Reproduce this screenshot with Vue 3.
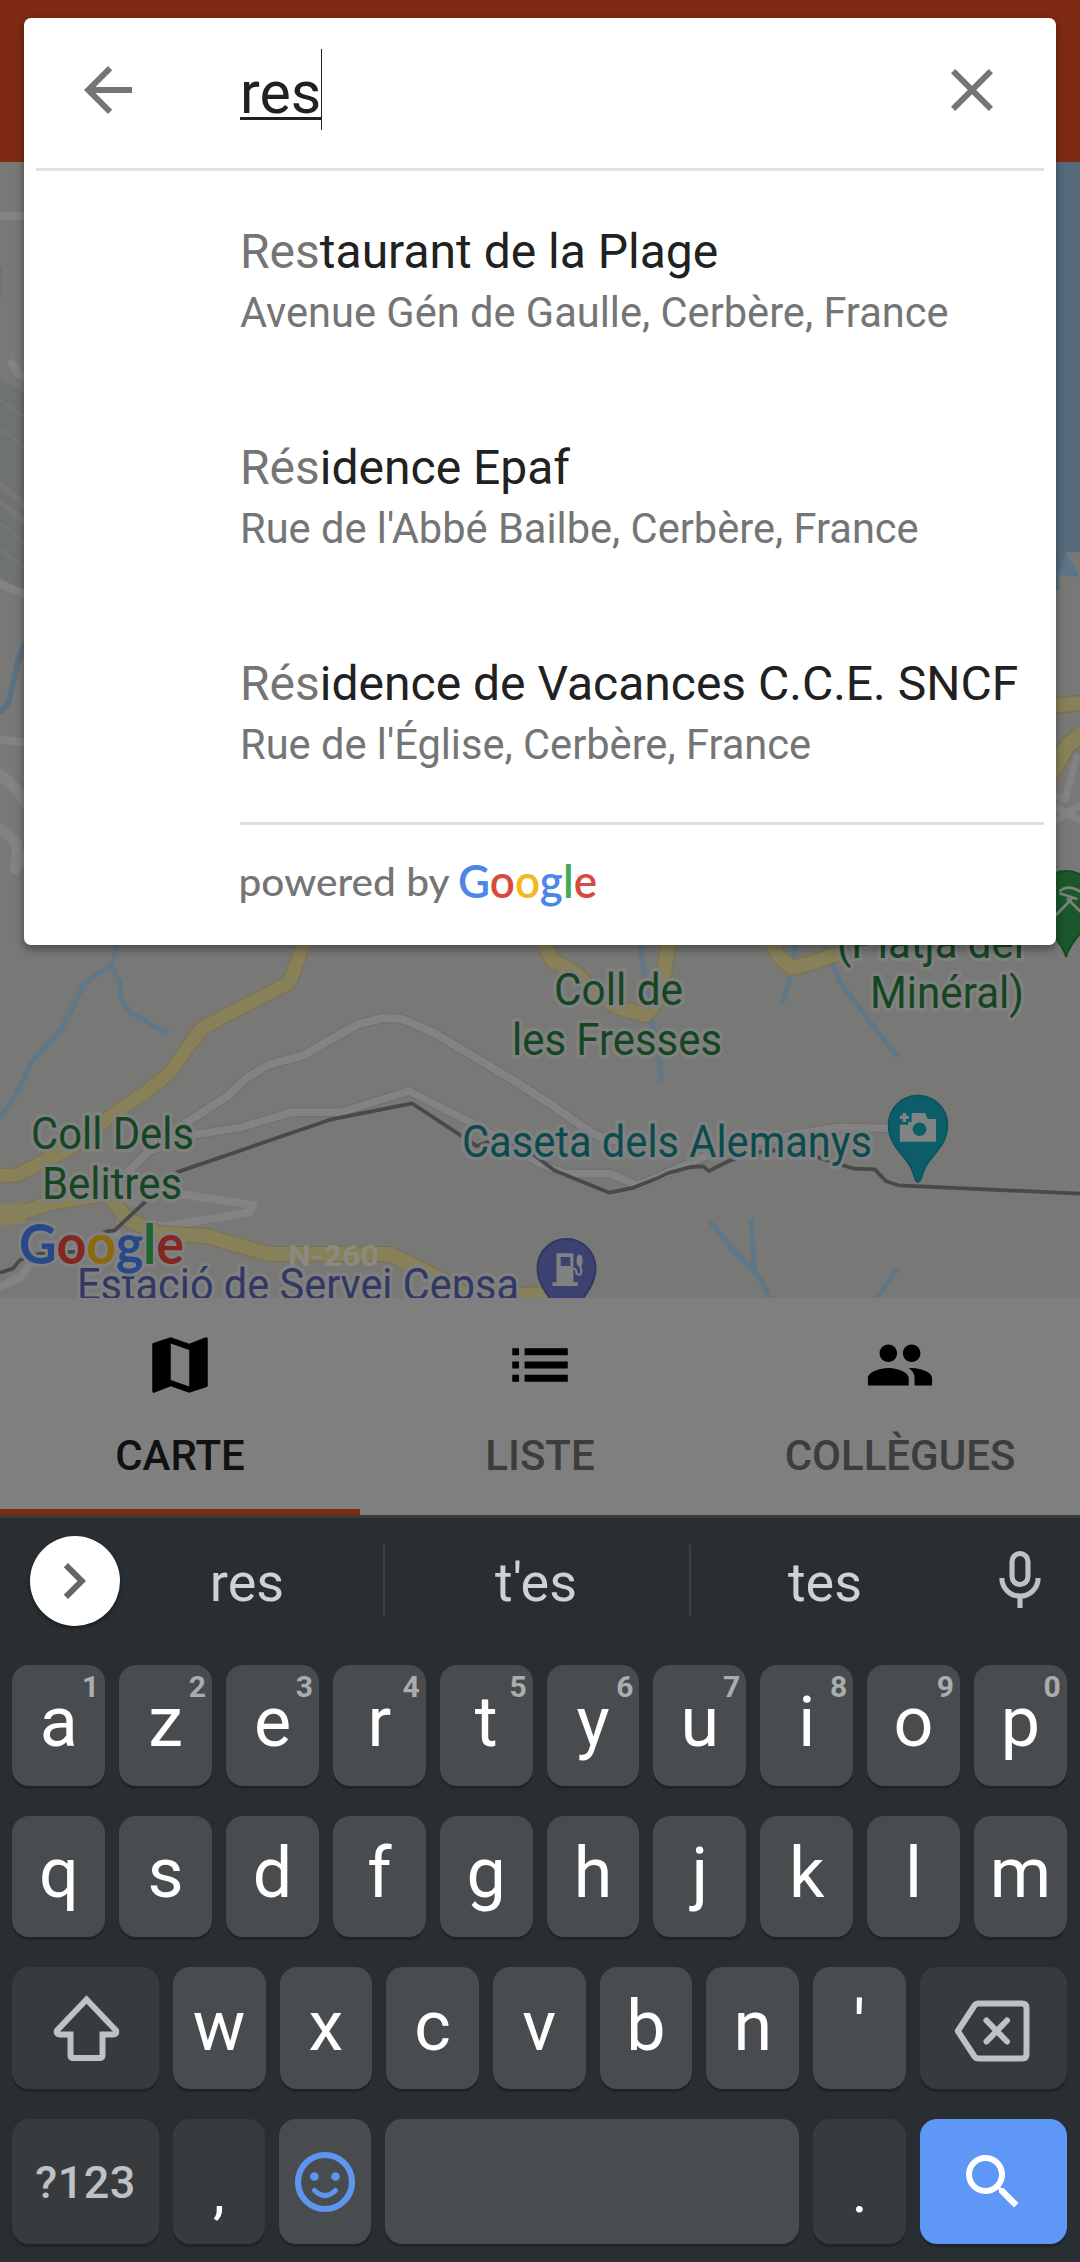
<script setup>
const results = [
  { match: 'Res', rest: 'taurant de la Plage', address: 'Avenue Gén de Gaulle, Cerbère, France' },
  { match: 'Rés', rest: 'idence Epaf', address: "Rue de l'Abbé Bailbe, Cerbère, France" },
  { match: 'Rés', rest: 'idence de Vacances C.C.E. SNCF', address: "Rue de l'Église, Cerbère, France" },
]

const tabs = [
  { label: 'CARTE', icon: 'map', active: true },
  { label: 'LISTE', icon: 'list', active: false },
  { label: 'COLLÈGUES', icon: 'people', active: false },
]

const topRow = 'azertyuiop'.split('').map((k, i) => ({ k, hint: (i + 1) % 10 }))
const midRow = 'qsdfghjklm'.split('')
const lowRow = "wxcvbn'".split('')
</script>

<template>
  <div class="screen">
    <header class="appbar"></header>

    <main class="map">
      <svg width="1080" height="1136" viewBox="0 162 1080 1136">
        <rect x="0" y="162" width="1080" height="1136" fill="#787876" />

        <!-- left edge -->
        <g transform="translate(0,150) scale(0.3333,0.5102)" class="ln">
          <path d="M0 450L90 480V890L0 835Z" fill="#6e7270" />
          <path d="M0 490L90 530M0 545L90 590M0 730L90 780M0 780L90 830" stroke="#747776" stroke-width="3" />
          <path d="M0 655L90 705M0 690L90 735" stroke="#7a7775" stroke-width="6" />
          <path d="M0 129H90M34 418L55 438L90 450" class="road" stroke-width="8" />
          <path d="M0 850L90 875M0 1156L90 1162" class="road" stroke-width="8" />
          <path d="M0 1222L55 1255L90 1290M0 1330L52 1360L45 1410L90 1370" class="road" stroke-width="10" />
          <path d="M0 230V290" stroke="#64737d" stroke-width="3" />
          <path d="M90 945L55 1000L25 1085L0 1102" stroke="#5b7080" stroke-width="6" />
        </g>

        <!-- right edge -->
        <g transform="translate(1020,150) scale(0.3333,0.5421)" class="ln">
          <path d="M100 0H180V742H137L178 787L150 780L117 783V812H100Z" fill="#556b7c" />
          <path d="M137 742L178 787L117 783L108 795" fill="#5a7588" />
          <path d="M100 1025L190 1020" class="casing" stroke-width="17" />
          <path d="M100 1025L190 1020" class="yellow" stroke-width="14" />
          <path d="M95 1150L140 1100L190 1075" class="casing" stroke-width="18" />
          <path d="M95 1150L140 1100L190 1075" class="yellow" stroke-width="15" />
          <path d="M100 1190L135 1198L170 1120M100 1210L190 1240M110 1235L190 1205" class="road" stroke-width="7" />
        </g>

        <g transform="translate(0,780) scale(0.34439,0.33801)" class="ln">
          <!-- streams -->
          <path d="M345 480L322 548L245 602L178 738L95 828L42 940L0 1000M322 548L350 605V645L378 688L430 718L490 747" class="river" />
          <path d="M1856 470L1872 580L1895 730L1910 780L1922 893M2310 480L2290 600L2272 660" class="river" />
          <path d="M2390 480L2440 600L2530 720L2607 820M2060 1305L2118 1375L2190 1455L2215 1490L2240 1540M2181 1298L2190 1450M2607 1445L2540 1540" class="river" />
          <path d="M2115 1385L2190 1450L2215 1490L2245 1550" class="river" stroke-width="6" />
          <!-- minor roads -->
          <path d="M0 -10L50 35L80 85" class="road" stroke-width="8" />
          <path d="M370 1160L430 1100L540 1015L660 935L715 882L780 842L880 815L1040 722L1115 704L1165 706L1260 748L1480 882L1600 960L1720 1045L1760 1062L1900 1085" class="casing2" stroke-width="10.5" />
          <path d="M370 1160L430 1100L540 1015L660 935L715 882L780 842L880 815L1040 722L1115 704L1165 706L1260 748L1480 882L1600 960L1720 1045L1760 1062L1900 1085" class="road" stroke-width="8" />
          <path d="M430 1100L560 1050L700 1028L850 982L990 983L1187 920L1380 1020L1560 1130L1640 1165L1775 1165L1850 1200L1920 1170L2100 1090L2300 1050L2430 1028L2590 1030" class="casing2" stroke-width="10" />
          <path d="M430 1100L560 1050L700 1028L850 982L990 983L1187 920L1380 1020L1560 1130L1640 1165L1775 1165L1850 1200L1920 1170L2100 1090L2300 1050L2430 1028L2590 1030" class="road" stroke-width="7.5" />
          <path d="M520 1225L735 1257L722 1280L480 1320L350 1310M0 1500L60 1470L90 1430L210 1390L340 1340" class="road" stroke-width="8" />
          <path d="M380 1170L300 1260L400 1260L440 1180Z" fill="#7e7e7e" />
          <!-- yellow roads -->
          <g class="casing">
            <path d="M885 470L842 598L585 735L490 870L420 925L300 1010L230 1075L50 1168L0 1170" stroke-width="15" />
            <path d="M0 1288L60 1280L150 1250L310 1225L340 1260L370 1300L460 1340L600 1350L780 1402H1130L1290 1480L1360 1530L1600 1520" stroke-width="16" />
            <path d="M1572 470L1605 535L1670 570L1740 640L1800 675L1875 695L1920 640L1942 470M2235 470L2260 520L2300 557L2360 540L2440 510" stroke-width="16" />
          </g>
          <g class="yellow">
            <path d="M885 470L842 598L585 735L490 870L420 925L300 1010L230 1075L50 1168L0 1170" stroke-width="13" />
            <path d="M0 1288L60 1280L150 1250L310 1225L340 1260L370 1300L460 1340L600 1350L780 1402H1130L1290 1480L1360 1530L1600 1520" stroke-width="14" />
            <path d="M1572 470L1605 535L1670 570L1740 640L1800 675L1875 695L1920 640L1942 470M2235 470L2260 520L2300 557L2360 540L2440 510" stroke-width="14" />
          </g>
          <path d="M0 1288L70 1280" class="yellow" stroke-width="21" />
          <!-- frontier -->
          <path d="M0 1458L38 1445L58 1420L120 1400L220 1395L310 1335L332 1333L430 1240L515 1160L965 1003L1197 957L1385 1083L1420 1070L1520 1085L1610 1155L1770 1221L1840 1206L1905 1180L1940 1163L2005 1145L2042 1143L2058 1157L2110 1130L2180 1103L2250 1096L2370 1115L2480 1150L2540 1152L2573 1187L2608 1199L3140 1224" stroke="#494949" stroke-width="3.800" />
        </g>

        <!-- place labels -->
        <g class="label green">
          <text x="31" y="1148.5" textLength="163" lengthAdjust="spacingAndGlyphs">Coll Dels</text>
          <text x="42" y="1199" textLength="140" lengthAdjust="spacingAndGlyphs">Belitres</text>
          <text x="554" y="1005" textLength="129" lengthAdjust="spacingAndGlyphs">Coll de</text>
          <text x="512" y="1055" textLength="210" lengthAdjust="spacingAndGlyphs">les Fresses</text>
          <text x="837" y="958" textLength="187" lengthAdjust="spacingAndGlyphs">(Platja del</text>
          <text x="870" y="1008" textLength="154" lengthAdjust="spacingAndGlyphs">Minéral)</text>
        </g>
        <text class="label teal" x="462" y="1157" textLength="410" lengthAdjust="spacingAndGlyphs">Caseta dels Alemanys</text>
        <text class="shield" x="288" y="1265.5" textLength="91" lengthAdjust="spacingAndGlyphs">N-260</text>
        <text class="label indigo" x="77" y="1300" textLength="442" lengthAdjust="spacingAndGlyphs">Estació de Servei Cepsa</text>

        <!-- pins -->
        <path transform="translate(1066,900)" d="M0 57C-3 40 -29 25 -29 0A29 29 0 0 1 29 0C29 25 3 40 0 57Z" fill="#1a572b" stroke="#164a24" stroke-width="2" />
        <path transform="translate(918,1125)" d="M0 57C-4 57 -3 49 -8 41C-14 30 -29.500 20 -29.500 0A29.500 29.500 0 0 1 29.500 0C29.500 20 14 30 8 41C3 49 4 57 0 57Z" fill="#0b5e69" stroke="#0b515a" stroke-width="1.500" />
        <path transform="translate(566.500,1268)" d="M0 57C-3 40 -29 25 -29 0A29 29 0 0 1 29 0C29 25 3 40 0 57Z" fill="#3c4270" stroke="#323765" stroke-width="2" />
        <g transform="translate(540,780) scale(0.34439,0.33801)">
          <path d="M1079 1003V985H1118L1126 1003H1150V1070H1045V1020H1069V1012H1079Z" fill="#818383" />
          <path d="M1053 985H1063V993H1071V1003H1063V1012H1053V1003H1045V993H1053Z" fill="#818383" />
          <circle cx="1102" cy="1033" r="20" fill="#0b5e69" />
          <path d="M48 1400H97V1486H110V1497H36V1486H48ZM60 1411V1438H88V1411Z" fill="#818181" fill-rule="evenodd" />
          <path d="M97 1445Q106 1445 106 1460Q118 1470 120 1455Q120 1445 115 1435V1408" fill="none" stroke="#818181" stroke-width="6" />
          <ellipse cx="115" cy="1422" rx="9" ry="18" fill="#818181" />
          <path d="M1498 400L1545 350M1530 350L1580 400M1508 330Q1535 305 1575 335M1508 335L1560 352" fill="none" stroke="#7c827c" stroke-width="8" />
        </g>

        <text class="brand dim" x="19" y="1264" font-size="55" textLength="165" lengthAdjust="spacingAndGlyphs"><tspan fill="#27498a">G</tspan><tspan fill="#832720">o</tspan><tspan fill="#8a6a0c">o</tspan><tspan fill="#27498a">g</tspan><tspan fill="#1d6431">l</tspan><tspan fill="#832720">e</tspan></text>
      </svg>
    </main>

    <nav class="tabs">
      <div v-for="t in tabs" :key="t.label" class="tab" :class="{ active: t.active }">
        <svg v-if="t.icon === 'map'" width="74" height="74" viewBox="0 0 24 24"><path d="M20.500 3l-.16.030L15 5.100 9 3 3.360 4.900c-.21.070-.36.250-.36.480V20.500c0 .28.220.5.5.5l.16-.03L9 18.900l6 2.100 5.640-1.900c.21-.07.36-.25.36-.48V3.500c0-.28-.22-.5-.5-.5zM15 19l-6-2.110V5l6 2.110V19z" /></svg>
        <svg v-else-if="t.icon === 'list'" width="74" height="74" viewBox="0 0 24 24"><path d="M3 13.100h2.200v-2.200H3zM3 17.400h2.200v-2.200H3zM3 8.800h2.200V6.600H3zM7 13.100h14v-2.200H7zM7 17.400h14v-2.200H7zM7 6.600v2.200h14V6.600z" /></svg>
        <svg v-else width="70" height="70" viewBox="0 0 24 24"><path d="M16 11c1.660 0 2.990-1.340 2.990-3S17.660 5 16 5c-1.660 0-3 1.340-3 3s1.340 3 3 3zm-8 0c1.660 0 2.990-1.340 2.990-3S9.660 5 8 5C6.340 5 5 6.340 5 8s1.340 3 3 3zm0 2c-2.330 0-7 1.170-7 3.500V19h14v-2.500c0-2.330-4.670-3.500-7-3.500zm8 0c-.29 0-.62.020-.97.050 1.160.84 1.970 1.970 1.970 3.450V19h6v-2.500c0-2.330-4.670-3.500-7-3.500z" /></svg>
        <span class="tab-label">{{ t.label }}</span>
      </div>
    </nav>

    <section class="keyboard">
      <div class="strip">
        <div class="expand">
          <svg width="72" height="72" viewBox="0 0 24 24"><path d="M8.590 16.590L13.170 12 8.590 7.410 10 6l6 6-6 6z" fill="#666" /></svg>
        </div>
        <span class="sug">res</span>
        <i class="sep"></i>
        <span class="sug wide">t'es</span>
        <i class="sep"></i>
        <span class="sug last">tes</span>
        <svg class="mic" width="72" height="72" viewBox="0 0 24 24" fill="none" stroke="#bfc2c4" stroke-width="1.700"><rect x="9.350" y="2.850" width="5.300" height="10.300" rx="2.650" /><path d="M5.950 11a6.050 6.050 0 0 0 12.100 0M12 17.300V21" /></svg>
      </div>

      <div class="row">
        <div v-for="t in topRow" :key="t.k" class="key"><span class="ch">{{ t.k }}</span><span class="hint">{{ t.hint }}</span></div>
      </div>
      <div class="row">
        <div v-for="k in midRow" :key="k" class="key"><span class="ch">{{ k }}</span></div>
      </div>
      <div class="row low">
        <div class="key fn side">
          <svg width="72" height="72" viewBox="0 0 72 72" fill="none" stroke="#bfc2c4" stroke-width="6" stroke-linejoin="round"><path d="M36.500 7.500L66 38.500Q67 42.500 63.500 42.500H52.500V63Q52.500 66 49.500 66H23.500Q20.500 66 20.500 63V42.500H9.500Q6 42.500 7 38.500Z" stroke-linejoin="miter" /></svg>
        </div>
        <div v-for="k in lowRow" :key="k" class="key"><span class="ch">{{ k }}</span></div>
        <div class="key fn side right">
          <svg class="bksp" width="76" height="62" viewBox="0 0 76 62" fill="none" stroke="#bfc2c4" stroke-width="6" stroke-linejoin="round"><path d="M3.800 31L20.500 5.500Q22 3.500 24.500 3.500H68Q72.500 3.500 72.500 8V54Q72.500 58.500 68 58.500H24.500Q22 58.500 20.500 56.500Z" /><path d="M32.500 20.500L53 41.500M53 20.500L32.500 41.500" stroke-linecap="round" /></svg>
        </div>
      </div>
      <div class="row tall">
        <div class="key fn side"><span class="sym">?123</span></div>
        <div class="key fn"><span class="punct">,</span></div>
        <div class="key">
          <svg width="62" height="62" viewBox="0 0 62 62" fill="none" stroke="#6095ef"><circle cx="31" cy="31" r="27" stroke-width="6.200" /><circle cx="20.300" cy="25.500" r="4.300" fill="#6095ef" stroke="none" /><circle cx="41.500" cy="25.500" r="4.300" fill="#6095ef" stroke="none" /><path d="M20.500 39.500Q31 49.500 41.500 39.500" stroke-width="5" stroke-linecap="round" /></svg>
        </div>
        <div class="key space"></div>
        <div class="key fn"><span class="punct">.</span></div>
        <div class="key go side right">
          <svg width="72" height="72" viewBox="0 0 24 24"><path fill="#fff" d="M15.500 14h-.79l-.28-.27A6.471 6.471 0 0 0 16 9.500 6.500 6.500 0 1 0 9.500 16c1.610 0 3.090-.59 4.230-1.570l.27.28v.79l5 4.990L20.490 19l-4.990-5zm-6 0C7.010 14 5 11.990 5 9.500S7.010 5 9.500 5 14 7.010 14 9.500 11.990 14 9.500 14z" /></svg>
        </div>
      </div>
    </section>

    <div class="card">
      <div class="search">
        <svg width="72" height="72" viewBox="0 0 24 24"><path fill="#757575" d="M20 11H7.830l5.590-5.590L12 4l-8 8 8 8 1.410-1.410L7.830 13H20v-2z" /></svg>
        <span class="query">res</span>
        <svg width="72" height="72" viewBox="0 0 24 24"><path fill="#757575" d="M19 6.410L17.590 5 12 10.590 6.410 5 5 6.410 10.590 12 5 17.590 6.410 19 12 13.410 17.590 19 19 17.590 13.410 12z" /></svg>
      </div>
      <div class="rule"></div>
      <div v-for="r in results" :key="r.address" class="result">
        <div class="title"><span class="match">{{ r.match }}</span>{{ r.rest }}</div>
        <div class="address">{{ r.address }}</div>
      </div>
      <div class="rule inset"></div>
      <svg class="powered" width="380" height="119" viewBox="240 826 380 119">
        <text class="by" x="238.500" y="897" font-size="38.500" textLength="211" lengthAdjust="spacingAndGlyphs">powered by</text>
        <text class="brand" x="458" y="898.500" font-size="46" textLength="139" lengthAdjust="spacingAndGlyphs"><tspan fill="#4c87e8">G</tspan><tspan fill="#d94a3d">o</tspan><tspan fill="#f0b91e">o</tspan><tspan fill="#4c87e8">g</tspan><tspan fill="#43a85a">l</tspan><tspan fill="#d94a3d">e</tspan></text>
      </svg>
    </div>
  </div>
</template>

<style>
body {
  background: #292e32;
}
</style>

<style scoped>
.screen {
  position: relative;
  display: flex;
  flex-direction: column;
  width: 1080px;
  height: 2262px;
  overflow: hidden;
  font-family: Roboto, sans-serif;
}
.appbar {
  flex: none;
  height: 162px;
  background: #7f2a12;
}
.map {
  flex: none;
  height: 1136px;
}
.map svg {
  display: block;
}
.ln path {
  vector-effect: non-scaling-stroke;
  stroke-linejoin: round;
}
.ln path:not([fill]) {
  fill: none;
}
.road {
  stroke: #838384;
  stroke-linecap: round;
}
.casing2 {
  stroke: #717171;
}
.casing {
  stroke: #7b714e;
  fill: none;
}
.yellow {
  stroke: #878059;
  fill: none;
}
.river {
  stroke: #5f7787;
  stroke-width: 5px;
}
.label {
  font-family: Roboto, sans-serif;
  font-size: 43.5px;
  paint-order: stroke;
  stroke: #808080;
  stroke-width: 7px;
  stroke-linejoin: round;
}
.green {
  fill: #154621;
}
.teal {
  fill: #0b4b50;
}
.indigo {
  fill: #323864;
}
.shield {
  font-family: Roboto, sans-serif;
  font-size: 30px;
  font-weight: 700;
  fill: #8a8a80;
}
.brand {
  font-family: Lato, sans-serif;
  font-weight: 600;
}
.brand.dim {
  font-weight: 700;
  paint-order: stroke;
  stroke: #808080;
  stroke-width: 6px;
}
.by {
  font-family: Lato, sans-serif;
  font-weight: 500;
  fill: #757575;
}

.tabs {
  flex: none;
  display: flex;
  height: 217px;
  background: #7f7f7f;
}
.tab {
  flex: 1;
  display: flex;
  flex-direction: column;
  align-items: center;
  box-sizing: border-box;
  padding-top: 30px;
}
.tab svg {
  height: 74px;
}
.tab-label {
  margin-top: 21px;
  font-size: 42px;
  font-weight: 500;
  line-height: 66px;
  color: #3d3d3d;
}
.active {
  border-bottom: 6px solid #7f2a12;
}
.active .tab-label {
  color: #111;
}

.keyboard {
  flex: 1;
  border-top: 3px solid #363b3e;
  background: #292e32;
}
.strip {
  display: flex;
  align-items: center;
  height: 126px;
  padding: 0 24px 21px 30px;
}
.expand {
  display: flex;
  align-items: center;
  justify-content: center;
  width: 90px;
  height: 90px;
  border-radius: 50%;
  background: #fff;
  box-shadow: 0 2px 4px rgba(0, 0, 0, 0.4);
}
.expand svg {
  margin-left: -2px;
}
.sug {
  width: 254px;
  margin-right: 9px;
  font-size: 54px;
  line-height: 72px;
  padding-top: 4px;
  text-align: center;
  color: #cfd1d3;
}
.sug.wide {
  width: 302px;
  margin: 0;
  padding-right: 2px;
}
.sug.last {
  width: 268px;
  margin: 0;
}
.sep {
  width: 2px;
  height: 72px;
  background: #3c4144;
}
.mic {
  margin-left: auto;
}
.row {
  display: flex;
  gap: 14px;
  height: 121px;
  margin-bottom: 30px;
  padding: 0 13.2px 0 12.4px;
}
.row.low {
  height: 122px;
}
.row.tall {
  height: 125px;
}
.key {
  position: relative;
  flex: 1 1 0;
  display: flex;
  align-items: center;
  justify-content: center;
  border-radius: 17px;
  background: #494c4e;
  box-shadow: 0 3px 0 #1f2427;
}
.fn {
  background: #373b3e;
}
.side {
  flex: none;
  width: 146.4px;
}
.side.right {
  width: 147px;
}
.space {
  flex: none;
  width: 414px;
}
.go {
  background: #5e97f6;
}
.ch {
  font-size: 70px;
  line-height: 80px;
  margin-top: -7px;
  color: #fff;
}
.low .ch {
  margin-top: -5px;
}
.hint {
  position: absolute;
  top: 4px;
  right: 6px;
  font-size: 30px;
  font-weight: 700;
  line-height: 36px;
  color: #aaadaf;
}
.sym {
  margin-top: 2px;
  font-size: 45px;
  font-weight: 500;
  letter-spacing: 0.5px;
  color: #bfc2c4;
}
.punct {
  margin-top: 20px;
  font-size: 60px;
  line-height: 70px;
  color: #fff;
}
.bksp {
  margin: 5px 3px 0 0;
}

.card {
  position: absolute;
  left: 24px;
  top: 18px;
  width: 1032px;
  height: 927px;
  border-radius: 7px;
  background: #fff;
  box-shadow: 0 4px 10px rgba(0, 0, 0, 0.4);
}
.search {
  display: flex;
  align-items: flex-start;
  justify-content: space-between;
  box-sizing: border-box;
  height: 150px;
  padding: 36px 48px 0;
}
.query {
  position: relative;
  margin-right: auto;
  margin-left: 96px;
  font-size: 59px;
  line-height: 77px;
  color: #212121;
}
.query::before {
  content: '';
  position: absolute;
  left: 0;
  right: 0;
  top: 63px;
  height: 3px;
  background: #212121;
}
.query::after {
  content: '';
  position: absolute;
  right: -1px;
  top: -5px;
  width: 1px;
  height: 81px;
  background: #212121;
}
.rule {
  height: 3px;
  margin: 0 12px;
  background: #e0e0e0;
}
.rule.inset {
  margin: 3px 12px 0 216px;
}
.result {
  box-sizing: border-box;
  height: 216px;
  padding: 51px 0 0 216px;
  white-space: nowrap;
}
.title {
  font-size: 48px;
  line-height: 60px;
  color: #212121;
}
.match,
.address {
  color: #757575;
}
.address {
  font-size: 41.6px;
  line-height: 62px;
}
.powered {
  display: block;
  margin-left: 216px;
  overflow: visible;
}
</style>
